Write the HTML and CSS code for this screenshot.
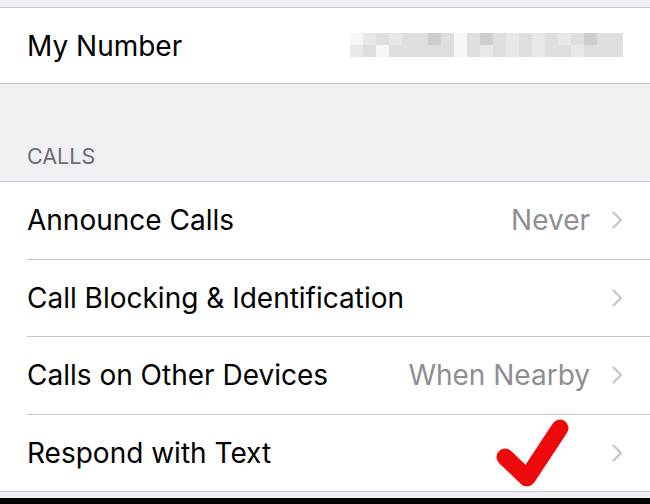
FILE: index.html
```html
<!DOCTYPE html>
<html lang="en">
<head>
    <meta charset="UTF-8">
    <meta name="viewport" content="width=device-width, initial-scale=1.0">
    <title>Phone</title>
    <link rel="stylesheet" href="styles.css">
</head>
<body>
    <div class="top-gap"></div>

    <div class="group number-group">
        <div class="cell">
            <span class="label">My Number</span>
            <!-- blurred phone number -->
            <div class="blur">
                <div class="blur-row">
                    <i class="b0"></i><i class="b1"></i><i class="b2"></i><i class="b1"></i><i class="b2"></i><i class="b2"></i><i class="b3"></i><i class="b2"></i><i class="b0"></i><i class="b2"></i><i class="b3"></i><i class="b2"></i><i class="b1"></i><i class="b2"></i><i class="b1"></i><i class="b2"></i><i class="b1"></i><i class="b2"></i><i class="b3"></i><i class="b2"></i><i class="b2"></i>
                </div>
                <div class="blur-row">
                    <i class="b1"></i><i class="b2"></i><i class="b0"></i><i class="b2"></i><i class="b2"></i><i class="b2"></i><i class="b2"></i><i class="b2"></i><i class="b0"></i><i class="b2"></i><i class="b1"></i><i class="b2"></i><i class="b1"></i><i class="b2"></i><i class="b1"></i><i class="b2"></i><i class="b2"></i><i class="b1"></i><i class="b2"></i><i class="b2"></i><i class="b2"></i>
                </div>
            </div>
        </div>
    </div>

    <div class="section-header">CALLS</div>

    <div class="group">
        <div class="cell">
            <span class="label">Announce Calls</span>
            <span class="value">Never</span>
            <span class="chevron"><svg width="11" height="18" viewBox="0 0 11 18"><path d="M1.5 1.5 L9 9 L1.5 16.5" fill="none" stroke="#c7c7cc" stroke-width="2.4" stroke-linecap="round" stroke-linejoin="round"/></svg></span>
        </div>
        <div class="cell">
            <span class="label">Call Blocking &amp; Identification</span>
            <span class="value"></span>
            <span class="chevron"><svg width="11" height="18" viewBox="0 0 11 18"><path d="M1.5 1.5 L9 9 L1.5 16.5" fill="none" stroke="#c7c7cc" stroke-width="2.4" stroke-linecap="round" stroke-linejoin="round"/></svg></span>
        </div>
        <div class="cell">
            <span class="label">Calls on Other Devices</span>
            <span class="value">When Nearby</span>
            <span class="chevron"><svg width="11" height="18" viewBox="0 0 11 18"><path d="M1.5 1.5 L9 9 L1.5 16.5" fill="none" stroke="#c7c7cc" stroke-width="2.4" stroke-linecap="round" stroke-linejoin="round"/></svg></span>
        </div>
        <div class="cell">
            <span class="label">Respond with Text</span>
            <span class="value"></span>
            <span class="chevron"><svg width="11" height="18" viewBox="0 0 11 18"><path d="M1.5 1.5 L9 9 L1.5 16.5" fill="none" stroke="#c7c7cc" stroke-width="2.4" stroke-linecap="round" stroke-linejoin="round"/></svg></span>
            <!-- red check drawn over the row -->
            <svg class="check" width="90" height="80" viewBox="0 0 90 80">
                <path d="M17 45 L39 66 L72 16" fill="none" stroke="#ee0a0a" stroke-width="17" stroke-linecap="round" stroke-linejoin="round"/>
            </svg>
        </div>
    </div>

    <div class="bottom-edge"></div>
</body>
</html>
```

FILE: styles.css
```css
body {
    margin: 0;
    background-color: #efeff4;
    font-family: Inter, "Liberation Sans", sans-serif;
    width: 650px;
    height: 504px;
    overflow: hidden;
    position: relative;
}
.top-gap {
    height: 7px;
}
.group {
    background-color: #fff;
    border-top: 1px solid #c8c7cc;
    border-bottom: 1px solid #c8c7cc;
}
.cell {
    display: flex;
    align-items: center;
    height: 76.6px;
    margin-left: 27px;
    padding-right: 27px;
    border-bottom: 1px solid #c8c7cc;
    position: relative;
}
.cell:last-child {
    border-bottom: none;
}
.number-group .cell {
    height: 75px;
}
.label {
    flex: 1;
    font-size: 28px;
    color: #000;
}
.value {
    font-size: 28px;
    color: #8e8e93;
    margin-right: 22px;
}
.chevron {
    display: flex;
    align-items: center;
}
.section-header {
    height: 97px;
    box-sizing: border-box;
    padding: 0 0 12px 27px;
    display: flex;
    align-items: flex-end;
    font-size: 21.5px;
    color: #6d6d72;
}
.blur {
    display: flex;
    flex-direction: column;
    margin-top: -2px;
}
.blur-row {
    display: flex;
}
.blur-row i {
    display: block;
    width: 13px;
    height: 12px;
}
.b0 { background-color: #f7f7f7; }
.b1 { background-color: #e8e8e8; }
.b2 { background-color: #dedede; }
.b3 { background-color: #cecece; }
.check {
    position: absolute;
    left: 461px;
    top: -3px;
}
.bottom-edge {
    position: absolute;
    left: 0;
    bottom: 0;
    width: 100%;
    height: 6px;
    background-color: #000;
}
```
